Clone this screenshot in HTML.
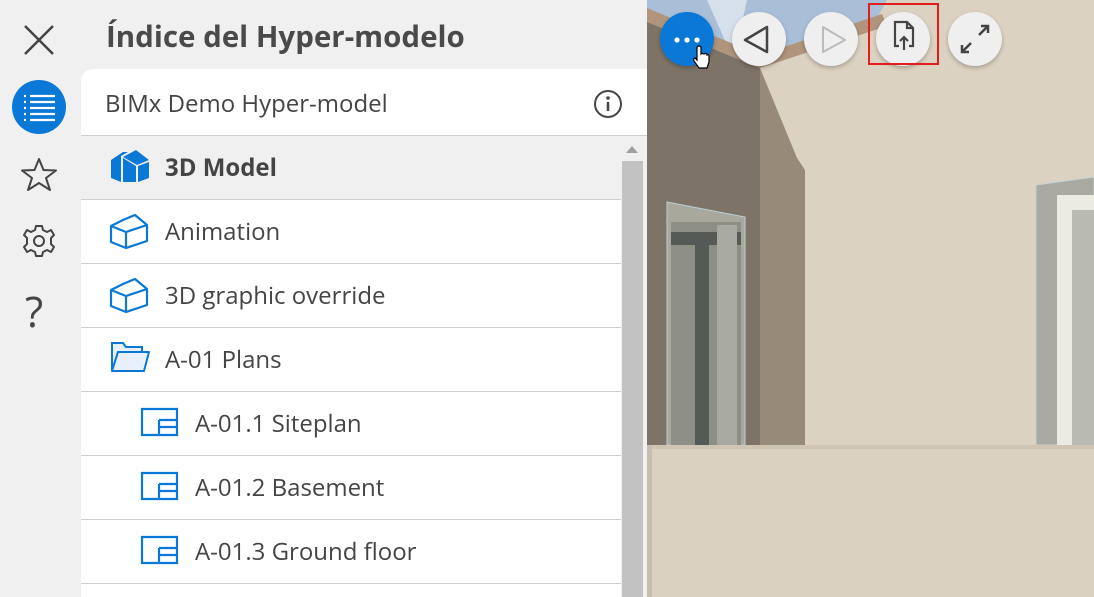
<!DOCTYPE html><html><head><meta charset="utf-8"><style>
*{margin:0;padding:0;box-sizing:border-box}
html,body{width:1094px;height:597px;overflow:hidden}
body{position:relative;background:#f0f0f0;font-family:"Open Sans","Liberation Sans",sans-serif;color:#444}
.abs{position:absolute}
.title{left:106px;top:15px;font-size:29.5px;font-weight:bold;color:#4a4a4a}
.panel{left:81px;top:69px;width:566px;height:528px;background:#fff;border-top-left-radius:12px;overflow:hidden}
.hdr{height:67px;border-bottom:1px solid #d0d0d0;font-size:24px;padding:18px 0 0 24px;color:#444}
.row{position:absolute;left:0;width:540px;height:64px;border-bottom:1px solid #d0d0d0;font-size:24px;color:#444}
.row span{position:absolute;top:15px}
.row svg{position:absolute}
.sb{left:621px;top:136px;width:26px;height:461px;background:#f0f0f0}
.thumb{left:622px;top:161px;width:21px;height:436px;background:#c2c2c2}
.btn{width:54px;height:54px;border-radius:50%;background:#efefef;top:12px;box-shadow:0 2px 4px rgba(0,0,0,.25)}
</style></head><body>
<!-- scene -->
<svg class="abs" style="left:647px;top:0" width="447" height="597">
<rect width="447" height="597" fill="#dcd2c1"/>
<polygon points="0,0 447,0 447,0 240,0 230,18 110,62 0,12" fill="#a9bfd8"/>
<polygon points="60,0 100,0 90,45 80,45" fill="#d6e0ea"/>
<polygon points="0,8 113,55 235,14 240,26 113,68 0,22" fill="#b0957c"/>
<polygon points="0,22 113,68 113,445 0,445" fill="#7d7366"/>
<polygon points="113,68 150,158 158,170 158,445 113,445" fill="#978a79"/>
<polygon points="20,202 98,217 98,445 20,445" fill="#a9a89d" stroke="#b9d0d8"/>
<rect x="24" y="222" width="70" height="223" fill="#8e8f84"/>
<rect x="48" y="235" width="14" height="210" fill="#545a56"/>
<rect x="24" y="232" width="70" height="13" fill="#555a57"/>
<rect x="70" y="225" width="20" height="220" fill="#a8a99f"/>
<polygon points="389,185 447,177 447,445 389,445" fill="#a9a99f" stroke="#c1d4da"/>
<rect x="410" y="195" width="37" height="250" fill="#ecebe2"/>
<rect x="425" y="210" width="22" height="235" fill="#b9bbb3"/>
<rect x="0" y="445" width="447" height="152" fill="#dbd1c0"/>
<rect x="0" y="445" width="447" height="4" fill="#cfc5b3"/>
<rect x="0" y="445" width="5" height="152" fill="#c8bead"/>
</svg>
<!-- buttons -->
<div class="abs btn" style="left:660px;background:#0a78d6"></div>
<svg class="abs" style="left:660px;top:12px" width="54" height="54"><circle cx="17" cy="28" r="2.6" fill="#fff"/><circle cx="27" cy="28" r="2.6" fill="#fff"/><circle cx="37" cy="28" r="2.6" fill="#fff"/></svg>
<div class="abs btn" style="left:732px"></div>
<svg class="abs" style="left:732px;top:12px" width="54" height="54"><path d="M35 15 L35 40 L13 28 Z" fill="none" stroke="#444" stroke-width="2.5" stroke-linejoin="round"/></svg>
<div class="abs btn" style="left:804px"></div>
<svg class="abs" style="left:804px;top:12px" width="54" height="54"><path d="M19 15 L19 40 L41 28 Z" fill="none" stroke="#bbb" stroke-width="2" stroke-linejoin="round"/></svg>
<div class="abs btn" style="left:876px"></div>
<svg class="abs" style="left:876px;top:12px" width="54" height="54"><path d="M23 34 H19 V10 H31 L37 16 V34 H33 M31 10 V16 H37 M28 38 V25 M24 29 L28 25 L32 29" fill="none" stroke="#444" stroke-width="2.2"/></svg>
<div class="abs" style="left:868px;top:3px;width:71px;height:62px;border:2px solid #e31c1c"></div>
<div class="abs btn" style="left:948px"></div>
<svg class="abs" style="left:948px;top:12px" width="54" height="54"><path d="M31 23 L39 15 M33 14 H40 V21 M23 31 L15 39 M14 33 V40 H21" fill="none" stroke="#444" stroke-width="2.5"/></svg>
<svg class="abs" style="left:692px;top:44px" width="20" height="28"><path d="M5 3 V16 L3 14 Q1 14 2 17 L7 24 H15 L17 18 V12 Q17 10 15 11 V10 Q13 9 12 10 Q10 9 9 10 V3 Q7 1 5 3Z" fill="#fff" stroke="#000" stroke-width="1.2"/></svg>
<!-- sidebar -->
<svg class="abs" style="left:22px;top:23px" width="34" height="34"><path d="M3 3 L31 31 M31 3 L3 31" stroke="#444" stroke-width="2.5"/></svg>
<div class="abs" style="left:12px;top:80px;width:54px;height:54px;border-radius:50%;background:#0a78d6"></div>
<svg class="abs" style="left:12px;top:80px" width="54" height="54"><g stroke="#fff" stroke-width="2.2"><path d="M18 16 H43 M18 22 H43 M18 28 H43 M18 34 H43 M18 40 H43"/><path d="M12 16 H14 M12 22 H14 M12 28 H14 M12 34 H14 M12 40 H14"/></g></svg>
<svg class="abs" style="left:20px;top:157px" width="38" height="36"><path d="M19 2 L23.5 13 L36 13.5 L26 21 L30 33 L19 26 L8 33 L12 21 L2 13.5 L14.5 13Z" fill="none" stroke="#444" stroke-width="2" stroke-linejoin="round"/></svg>
<svg class="abs" style="left:21px;top:223px" width="36" height="36"><circle cx="18" cy="18" r="5" fill="none" stroke="#444" stroke-width="2"/><path d="M15 3H21L22 7L26 9L30 7L33 12L30 15V21L33 24L30 29L26 27L22 29L21 33H15L14 29L10 27L6 29L3 24L6 21V15L3 12L6 7L10 9L14 7Z" fill="none" stroke="#444" stroke-width="2" stroke-linejoin="round"/></svg>
<div class="abs" style="left:25px;top:283px;font-size:42px;color:#444">?</div>
<div class="abs title">Índice del Hyper-modelo</div>
<div class="abs panel">
<div class="hdr">BIMx Demo Hyper-model</div>
<svg class="abs" style="left:512px;top:20px" width="30" height="30"><circle cx="15" cy="15" r="13" fill="none" stroke="#444" stroke-width="2"/><circle cx="15" cy="9" r="1.8" fill="#444"/><path d="M15 13V22" stroke="#444" stroke-width="2.5"/></svg>
<div class="row" style="top:67px;background:#f0f0f0"><svg style="left:28px;top:12px" width="44" height="40"><path d="M2 12 L14 4 L19 4 L12 8 L12 34 L2 30Z M14 9 L27 2 L40 12 L28 17Z M14 10 L27 18 L27 34 L14 34Z M29 18 L40 14 L40 30 L29 34Z" fill="#0a78d6"/></svg><span style="left:84px;font-weight:bold">3D Model</span></div>
<div class="row" style="top:131px"><svg style="left:28px;top:12px" width="44" height="40"><path d="M2 14 L14 8 L26 3 L38 13 L38 29 L17 36 L2 30Z M2 14 L17 20 L38 13 M17 20 V36 M14 8 L26 3" fill="none" stroke="#0a78d6" stroke-width="2.2" stroke-linejoin="round"/></svg><span style="left:84px">Animation</span></div>
<div class="row" style="top:195px"><svg style="left:28px;top:12px" width="44" height="40"><path d="M2 14 L14 8 L26 3 L38 13 L38 29 L17 36 L2 30Z M2 14 L17 20 L38 13 M17 20 V36" fill="none" stroke="#0a78d6" stroke-width="2.2" stroke-linejoin="round"/></svg><span style="left:84px">3D graphic override</span></div>
<div class="row" style="top:259px"><svg style="left:28px;top:10px" width="44" height="40"><path d="M3 5 H14 L17 9 H33 V14 H9 L3 33Z" fill="#e8f1fb" stroke="#0a78d6" stroke-width="2"/><path d="M3 33 L9 14 H40 L35 33Z" fill="#e8f1fb" stroke="#0a78d6" stroke-width="2" stroke-linejoin="round"/></svg><span style="left:84px">A-01 Plans</span></div>
<div class="row" style="top:323px"><svg style="left:58px;top:14px" width="44" height="34"><path d="M3 3 H38 V29 H3Z M20 14 H38 M20 14 V29 M20 21 H38" fill="none" stroke="#0a78d6" stroke-width="2.2"/></svg><span style="left:114px">A-01.1 Siteplan</span></div>
<div class="row" style="top:387px"><svg style="left:58px;top:14px" width="44" height="34"><path d="M3 3 H38 V29 H3Z M20 14 H38 M20 14 V29 M20 21 H38" fill="none" stroke="#0a78d6" stroke-width="2.2"/></svg><span style="left:114px">A-01.2 Basement</span></div>
<div class="row" style="top:451px"><svg style="left:58px;top:14px" width="44" height="34"><path d="M3 3 H38 V29 H3Z M20 14 H38 M20 14 V29 M20 21 H38" fill="none" stroke="#0a78d6" stroke-width="2.2"/></svg><span style="left:114px">A-01.3 Ground floor</span></div>
</div>
<div class="abs sb"></div>
<svg class="abs" style="left:625px;top:144px" width="14" height="10"><path d="M1 9 L7 2 L13 9Z" fill="#a0a0a0"/></svg>
<div class="abs thumb"></div>
</body></html>
